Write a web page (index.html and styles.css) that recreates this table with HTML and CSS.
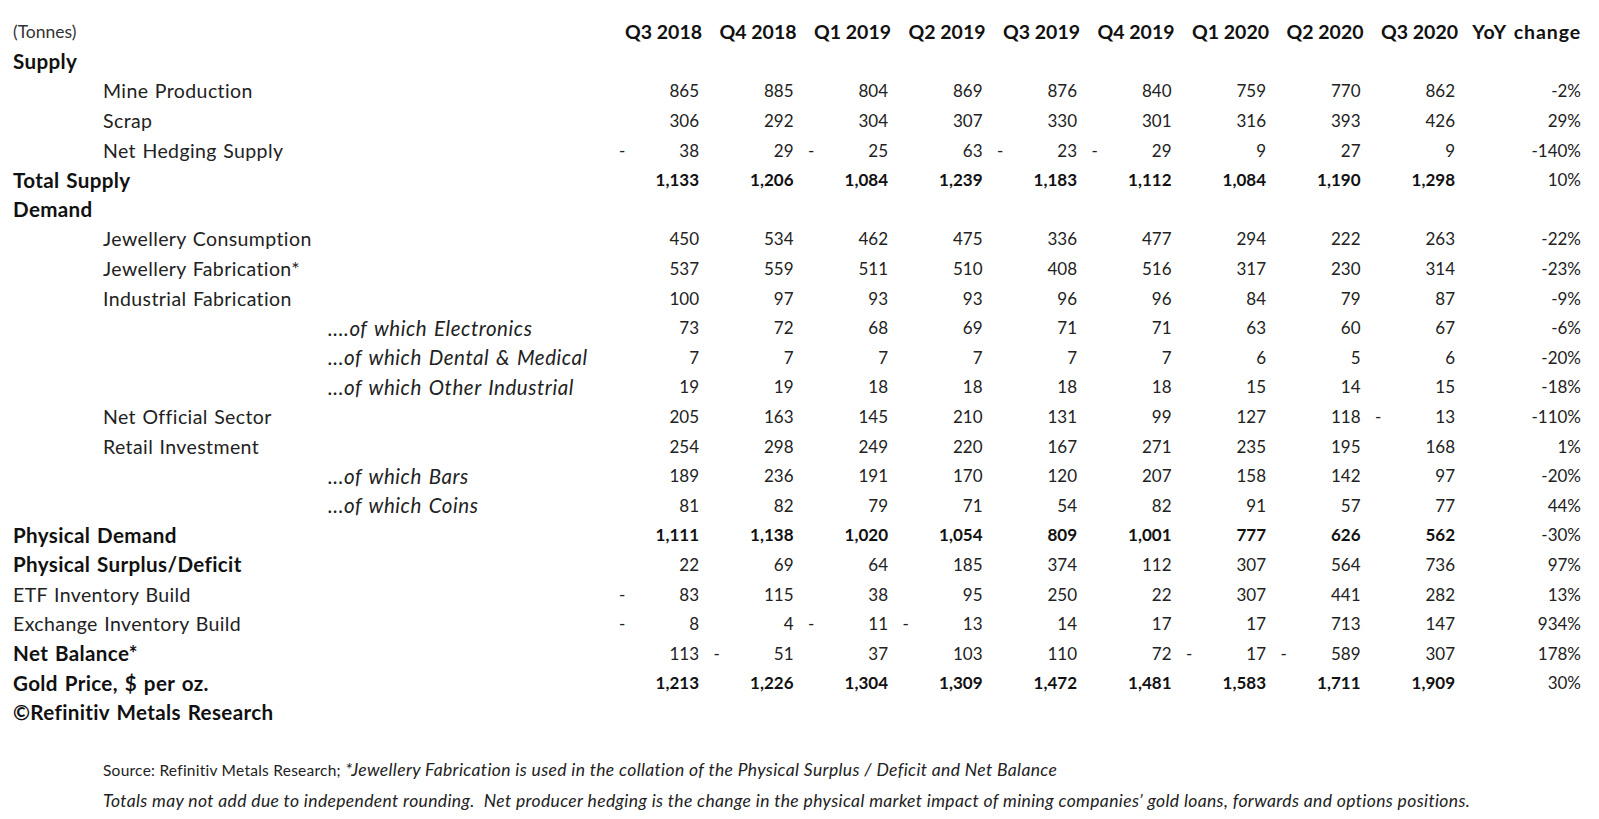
FILE: index.html
```html
<!DOCTYPE html>
<html>
<head>
<meta charset="utf-8">
<link rel="stylesheet" href="styles.css">
</head>
<body>
<table class="sd">
<colgroup>
<col class="c-lbl"><col class="c-q"><col class="c-q"><col class="c-q"><col class="c-q"><col class="c-q"><col class="c-q"><col class="c-q"><col class="c-q"><col class="c-q"><col class="c-yoy">
</colgroup>
<thead>
<tr class="hdr"><th class="lbl unit">(Tonnes)</th><th>Q3 2018</th><th>Q4 2018</th><th>Q1 2019</th><th>Q2 2019</th><th>Q3 2019</th><th>Q4 2019</th><th>Q1 2020</th><th>Q2 2020</th><th>Q3 2020</th><th class="yoyh">YoY change</th></tr>
</thead>
<tbody>
<tr class="b"><td class="lbl">Supply</td><td></td><td></td><td></td><td></td><td></td><td></td><td></td><td></td><td></td><td></td></tr>
<tr><td class="lbl l1">Mine Production</td><td>865</td><td>885</td><td>804</td><td>869</td><td>876</td><td>840</td><td>759</td><td>770</td><td>862</td><td class="yoy">-2%</td></tr>
<tr><td class="lbl l1">Scrap</td><td>306</td><td>292</td><td>304</td><td>307</td><td>330</td><td>301</td><td>316</td><td>393</td><td>426</td><td class="yoy">29%</td></tr>
<tr><td class="lbl l1">Net Hedging Supply</td><td><span class="neg">-</span>38</td><td>29</td><td><span class="neg">-</span>25</td><td>63</td><td><span class="neg">-</span>23</td><td><span class="neg">-</span>29</td><td>9</td><td>27</td><td>9</td><td class="yoy">-140%</td></tr>
<tr class="b"><td class="lbl">Total Supply</td><td>1,133</td><td>1,206</td><td>1,084</td><td>1,239</td><td>1,183</td><td>1,112</td><td>1,084</td><td>1,190</td><td>1,298</td><td class="yoy">10%</td></tr>
<tr class="b"><td class="lbl">Demand</td><td></td><td></td><td></td><td></td><td></td><td></td><td></td><td></td><td></td><td></td></tr>
<tr><td class="lbl l1">Jewellery Consumption</td><td>450</td><td>534</td><td>462</td><td>475</td><td>336</td><td>477</td><td>294</td><td>222</td><td>263</td><td class="yoy">-22%</td></tr>
<tr><td class="lbl l1">Jewellery Fabrication*</td><td>537</td><td>559</td><td>511</td><td>510</td><td>408</td><td>516</td><td>317</td><td>230</td><td>314</td><td class="yoy">-23%</td></tr>
<tr><td class="lbl l1">Industrial Fabrication</td><td>100</td><td>97</td><td>93</td><td>93</td><td>96</td><td>96</td><td>84</td><td>79</td><td>87</td><td class="yoy">-9%</td></tr>
<tr><td class="lbl l2">....of which Electronics</td><td>73</td><td>72</td><td>68</td><td>69</td><td>71</td><td>71</td><td>63</td><td>60</td><td>67</td><td class="yoy">-6%</td></tr>
<tr><td class="lbl l2">...of which Dental &amp; Medical</td><td>7</td><td>7</td><td>7</td><td>7</td><td>7</td><td>7</td><td>6</td><td>5</td><td>6</td><td class="yoy">-20%</td></tr>
<tr><td class="lbl l2">...of which Other Industrial</td><td>19</td><td>19</td><td>18</td><td>18</td><td>18</td><td>18</td><td>15</td><td>14</td><td>15</td><td class="yoy">-18%</td></tr>
<tr><td class="lbl l1">Net Official Sector</td><td>205</td><td>163</td><td>145</td><td>210</td><td>131</td><td>99</td><td>127</td><td>118</td><td><span class="neg">-</span>13</td><td class="yoy">-110%</td></tr>
<tr><td class="lbl l1">Retail Investment</td><td>254</td><td>298</td><td>249</td><td>220</td><td>167</td><td>271</td><td>235</td><td>195</td><td>168</td><td class="yoy">1%</td></tr>
<tr><td class="lbl l2">...of which Bars</td><td>189</td><td>236</td><td>191</td><td>170</td><td>120</td><td>207</td><td>158</td><td>142</td><td>97</td><td class="yoy">-20%</td></tr>
<tr><td class="lbl l2">...of which Coins</td><td>81</td><td>82</td><td>79</td><td>71</td><td>54</td><td>82</td><td>91</td><td>57</td><td>77</td><td class="yoy">44%</td></tr>
<tr class="b"><td class="lbl">Physical Demand</td><td>1,111</td><td>1,138</td><td>1,020</td><td>1,054</td><td>809</td><td>1,001</td><td>777</td><td>626</td><td>562</td><td class="yoy">-30%</td></tr>
<tr><td class="lbl bl">Physical Surplus/Deficit</td><td>22</td><td>69</td><td>64</td><td>185</td><td>374</td><td>112</td><td>307</td><td>564</td><td>736</td><td class="yoy">97%</td></tr>
<tr><td class="lbl">ETF Inventory Build</td><td><span class="neg">-</span>83</td><td>115</td><td>38</td><td>95</td><td>250</td><td>22</td><td>307</td><td>441</td><td>282</td><td class="yoy">13%</td></tr>
<tr><td class="lbl">Exchange Inventory Build</td><td><span class="neg">-</span>8</td><td>4</td><td><span class="neg">-</span>11</td><td><span class="neg">-</span>13</td><td>14</td><td>17</td><td>17</td><td>713</td><td>147</td><td class="yoy">934%</td></tr>
<tr><td class="lbl bl">Net Balance*</td><td>113</td><td><span class="neg">-</span>51</td><td>37</td><td>103</td><td>110</td><td>72</td><td><span class="neg">-</span>17</td><td><span class="neg">-</span>589</td><td>307</td><td class="yoy">178%</td></tr>
<tr class="b"><td class="lbl">Gold Price, $ per oz.</td><td>1,213</td><td>1,226</td><td>1,304</td><td>1,309</td><td>1,472</td><td>1,481</td><td>1,583</td><td>1,711</td><td>1,909</td><td class="yoy">30%</td></tr>
<tr class="b"><td class="lbl" colspan="11">©Refinitiv Metals Research</td></tr>
</tbody>
</table>
<div class="notes">
<p>Source: Refinitiv Metals Research; <em>*Jewellery Fabrication is used in the collation of the Physical Surplus / Deficit and Net Balance</em></p>
<p><em>Totals may not add due to independent rounding.&nbsp; Net producer hedging is the change in the physical market impact of mining companies’ gold loans, forwards and options positions.</em></p>
</div>
</body>
</html>
```
FILE: styles.css
```css
html, body {
  margin: 0;
  padding: 0;
  background: #ffffff;
}
body {
  font-family: Lato, "Liberation Sans", sans-serif;
  color: #222;
  font-size: 17px;
}
.sd {
  border-collapse: collapse;
  table-layout: fixed;
  width: 1586px;
  margin-top: 17px;
}
.c-lbl { width: 609px; }
.c-q { width: 94.5px; }
.c-yoy { width: 126.5px; }
.sd td, .sd th {
  height: 29.6px;
  padding: 0 4.5px 0 10px;
  text-align: right;
  vertical-align: middle;
  white-space: nowrap;
  font-weight: 400;
}
.sd .hdr th {
  font-weight: 700;
  font-size: 19.5px;
  color: #111;
  padding-right: 1.5px;
}
.sd .hdr th.yoyh {
  letter-spacing: 0.9px;
  word-spacing: 2px;
  padding-right: 5px;
}
.sd .hdr th.unit {
  font-weight: 400;
  font-size: 17.5px;
  color: #333;
}
.sd td.lbl, .sd th.lbl {
  text-align: left;
  padding-left: 13px;
}
.sd td.lbl {
  font-size: 19.5px;
  letter-spacing: 0.4px;
  word-spacing: 1px;
}
.sd td.l1 { padding-left: 103px; }
.sd td.l2 {
  padding-left: 328px;
  font-style: italic;
  font-size: 20.5px;
  letter-spacing: 0.55px;
  word-spacing: 1.5px;
}
.sd tr.b td { font-weight: 700; color: #111; }
.sd tr.b td.yoy, .sd td.yoy { font-weight: 400; color: #222; }
.sd td.bl { font-weight: 700; color: #111; }
.sd tr.b td.lbl, .sd td.bl {
  font-size: 20.6px;
  letter-spacing: 0.35px;
  word-spacing: 1.5px;
}
.sd td.yoy { padding-right: 5px; }
.neg { float: left; }
.notes {
  margin: 28px 0 0 103px;
  font-size: 15.5px;
  letter-spacing: 0.25px;
  color: #222;
}
.notes em {
  font-size: 17.5px;
  letter-spacing: 0.36px;
}
.notes p {
  margin: 0;
  line-height: 29.5px;
}
```
